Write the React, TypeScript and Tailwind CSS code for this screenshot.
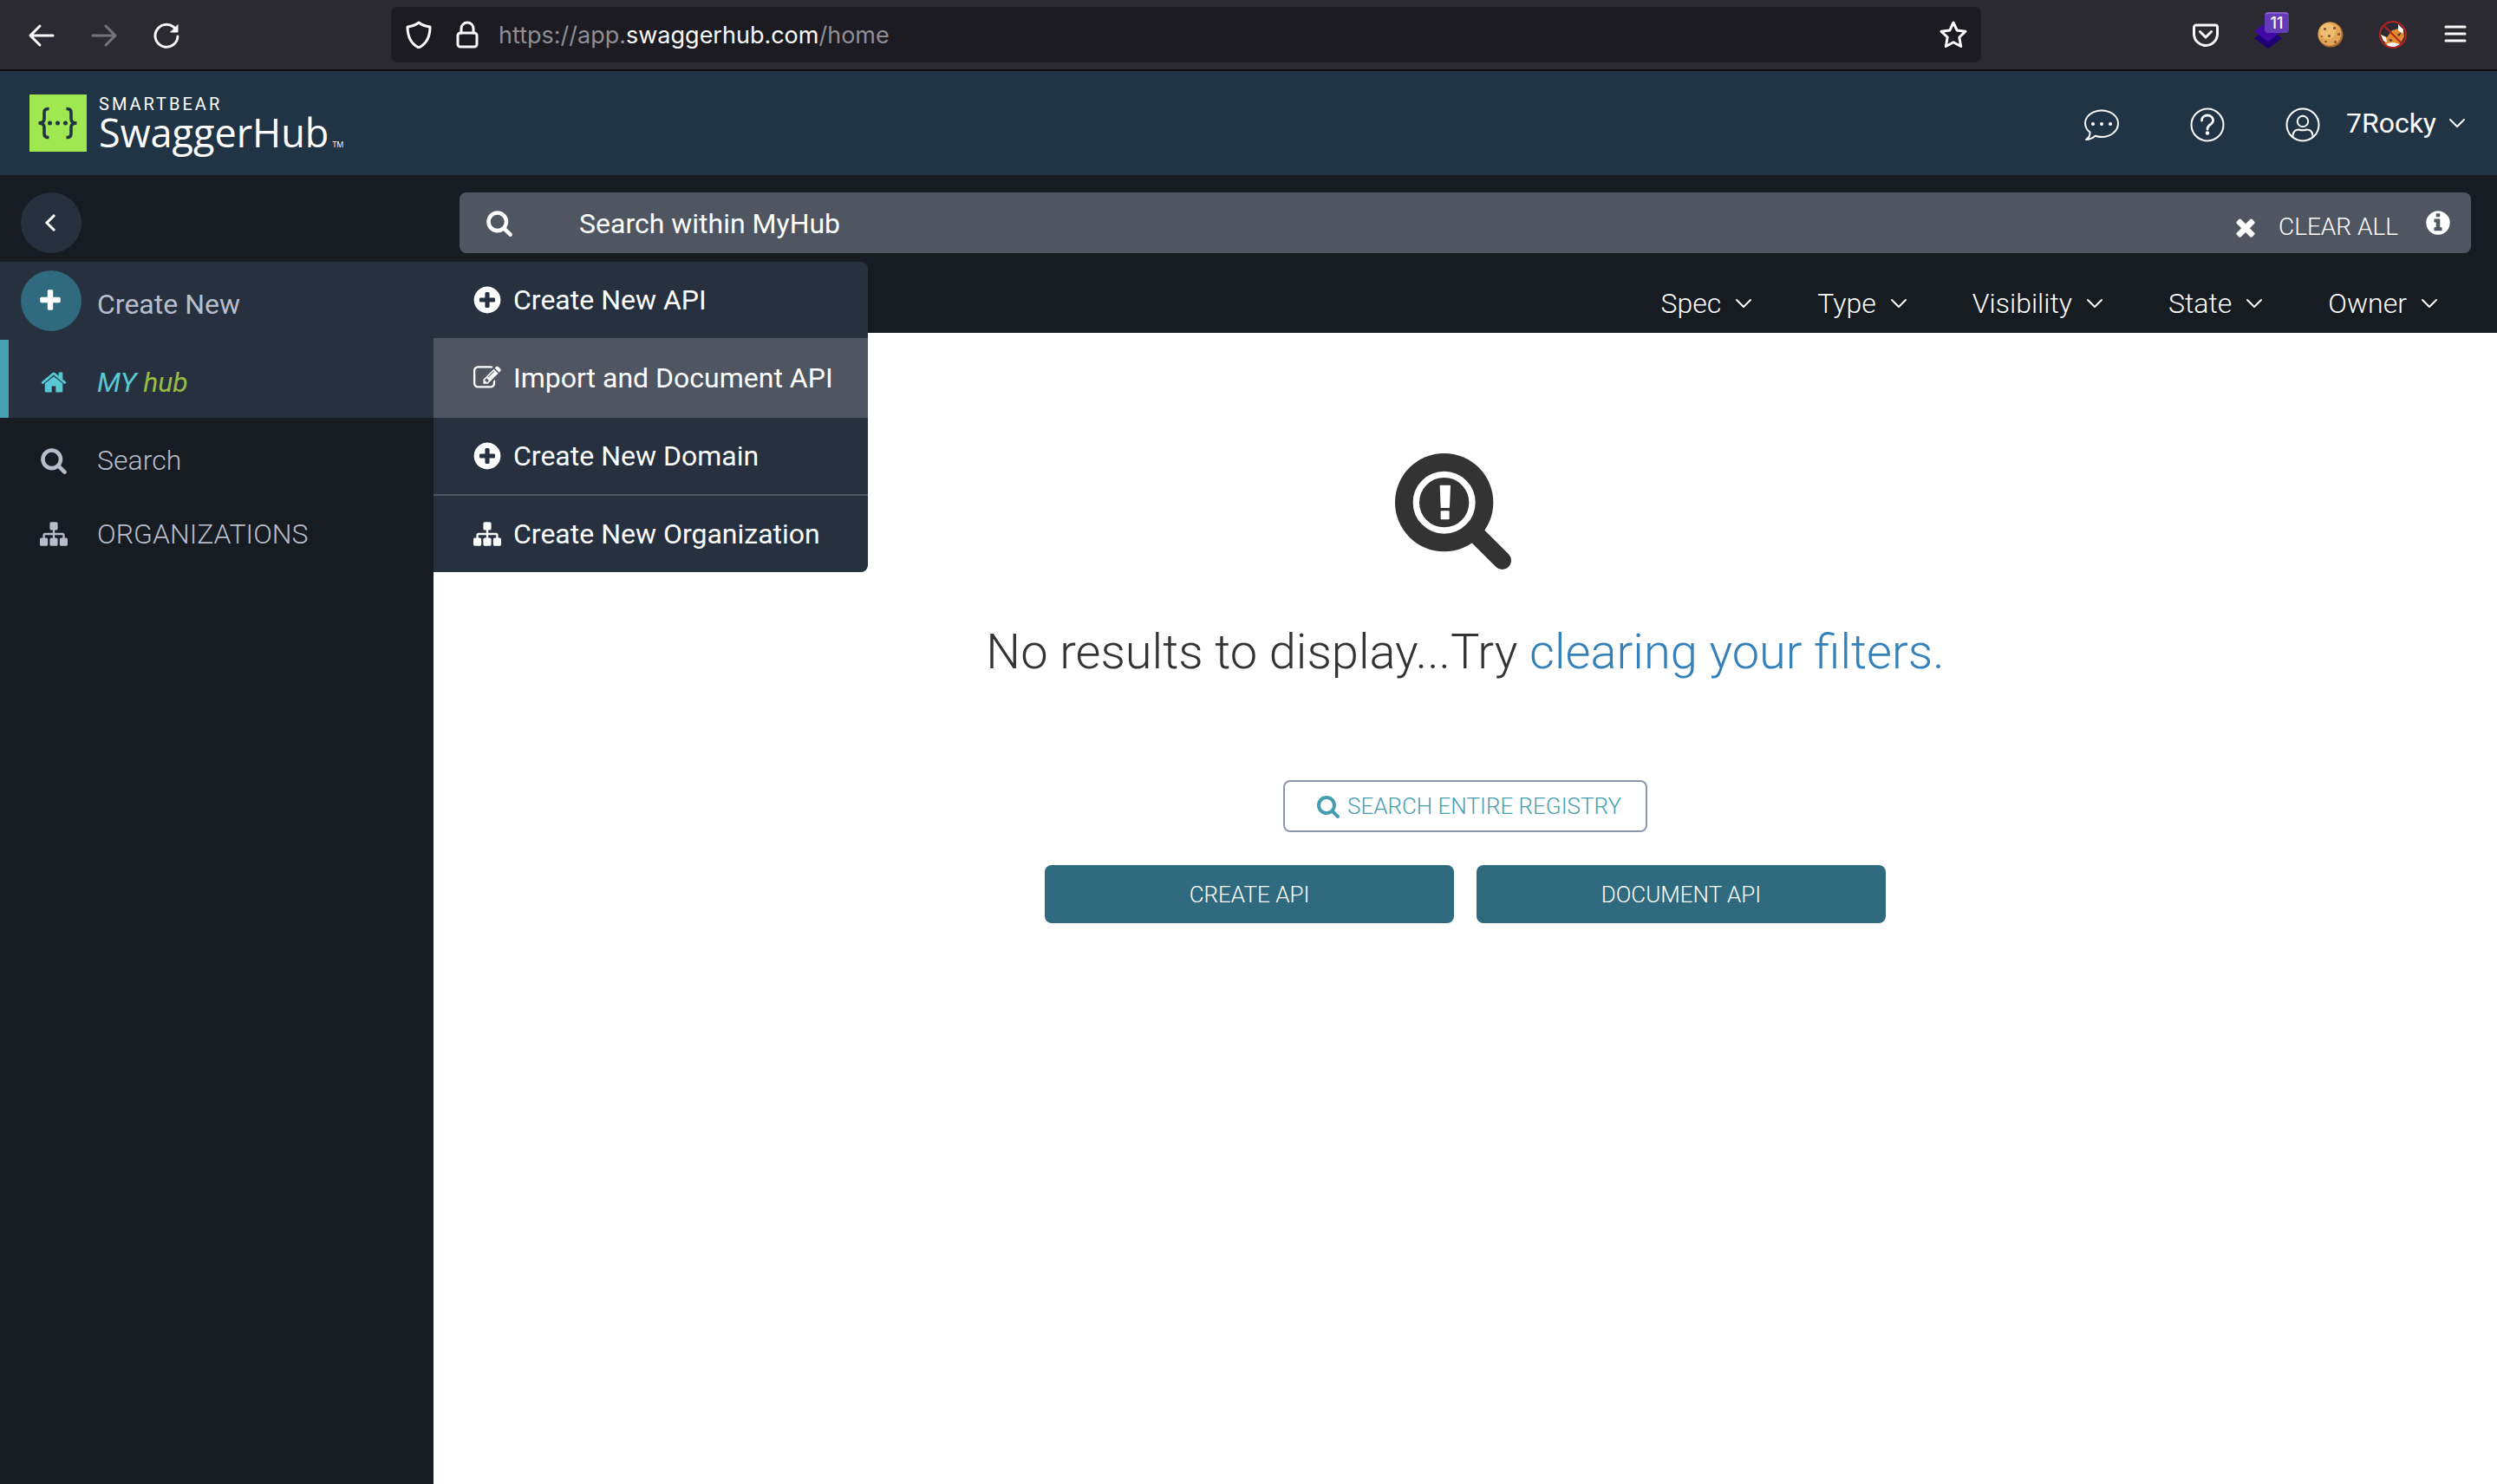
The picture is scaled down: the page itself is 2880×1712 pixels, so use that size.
import type { ReactNode } from "react";

const glyphs = {
  search:
    "M1216 832q0-185-131.5-316.5t-316.5-131.5-316.5 131.5-131.5 316.5 131.5 316.5 316.5 131.5 316.5-131.5 131.5-316.5zm512 832q0 52-38 90t-90 38q-54 0-90-38l-343-342q-179 124-399 124-143 0-273.5-55.5t-225-150-150-225-55.5-273.5 55.5-273.5 150-225 225-150 273.5-55.5 273.5 55.5 225 150 150 225 55.5 273.5q0 220-124 399l343 343q37 37 37 90z",
  plus: "M1600 736v192q0 40-28 68t-68 28h-416v416q0 40-28 68t-68 28h-192q-40 0-68-28t-28-68v-416h-416q-40 0-68-28t-28-68v-192q0-40 28-68t68-28h416v-416q0-40 28-68t68-28h192q40 0 68 28t28 68v416h416q40 0 68 28t28 68z",
  plusCircle:
    "M1344 960v-128q0-26-19-45t-45-19h-256v-256q0-26-19-45t-45-19h-128q-26 0-45 19t-19 45v256h-256q-26 0-45 19t-19 45v128q0 26 19 45t45 19h256v256q0 26 19 45t45 19h128q26 0 45-19t19-45v-256h256q26 0 45-19t19-45zm320-64q0 209-103 385.5t-279.5 279.5-385.5 103-385.5-103-279.5-279.5-103-385.5 103-385.5 279.5-279.5 385.5-103 385.5 103 279.5 279.5 103 385.5z",
  home: "M1472 992v480q0 26-19 45t-45 19h-384v-384h-256v384h-384q-26 0-45-19t-19-45v-480q0-1 .5-3t.5-3l575-474 575 474q1 2 1 6zm223-69l-62 74q-8 9-21 11h-3q-13 0-21-7l-692-577-692 577q-12 8-24 7-13-2-21-11l-62-74q-8-10-7-23.5t11-21.5l719-599q32-26 76-26t76 26l244 204v-195q0-14 9-23t23-9h192q14 0 23 9t9 23v408l219 182q10 8 11 21.5t-7 23.5z",
  sitemap:
    "M1792 1248v320q0 40-28 68t-68 28h-320q-40 0-68-28t-28-68v-320q0-40 28-68t68-28h96v-192h-512v192h96q40 0 68 28t28 68v320q0 40-28 68t-68 28h-320q-40 0-68-28t-28-68v-320q0-40 28-68t68-28h96v-192h-512v192h96q40 0 68 28t28 68v320q0 40-28 68t-68 28h-320q-40 0-68-28t-28-68v-320q0-40 28-68t68-28h96v-192q0-52 38-90t90-38h512v-192h-96q-40 0-68-28t-28-68v-320q0-40 28-68t68-28h320q40 0 68 28t28 68v320q0 40-28 68t-68 28h-96v192h512q52 0 90 38t38 90v192h96q40 0 68 28t28 68z",
  edit: "M888 1184l116-116-152-152-116 116v56h96v96h56zm440-720q-16-16-33 1l-350 350q-17 17-1 33t33-1l350-350q17-17 1-33zm80 594v190q0 119-84.5 203.5t-203.5 84.5h-832q-119 0-203.5-84.5t-84.5-203.5v-832q0-119 84.5-203.5t203.5-84.5h832q63 0 117 25 15 7 18 23 3 17-9 29l-49 49q-14 14-32 8-23-6-45-6h-832q-66 0-113 47t-47 113v832q0 66 47 113t113 47h832q66 0 113-47t47-113v-126q0-13 9-22l64-64q15-15 35-7t20 29zm-96-738l288 288-672 672h-288v-288zm444 132l-92 92-288-288 92-92q28-28 68-28t68 28l152 152q28 28 28 68t-28 68z",
  times:
    "M1490 1322q0 40-28 68l-136 136q-28 28-68 28t-68-28l-294-294-294 294q-28 28-68 28t-68-28l-136-136q-28-28-28-68t28-68l294-294-294-294q-28-28-28-68t28-68l136-136q28-28 68-28t68 28l294 294 294-294q28-28 68-28t68 28l136 136q28 28 28 68t-28 68l-294 294 294 294q28 28 28 68z",
  info: "M1152 1376v-160q0-14-9-23t-23-9h-96v-512q0-14-9-23t-23-9h-320q-14 0-23 9t-9 23v160q0 14 9 23t23 9h96v320h-96q-14 0-23 9t-9 23v160q0 14 9 23t23 9h448q14 0 23-9t9-23zm-128-896v-160q0-14-9-23t-23-9h-192q-14 0-23 9t-9 23v160q0 14 9 23t23 9h192q14 0 23-9t9-23zm640 416q0 209-103 385.5t-279.5 279.5-385.5 103-385.5-103-279.5-279.5-103-385.5 103-385.5 279.5-279.5 385.5-103 385.5 103 279.5 279.5 103 385.5z",
};

type GlyphName = keyof typeof glyphs;

function Glyph({ name, className = "size-8" }: { name: GlyphName; className?: string }) {
  return (
    <svg viewBox="0 0 1792 1792" fill="currentColor" aria-hidden="true" className={`shrink-0 ${className}`}>
      <path d={glyphs[name]} />
    </svg>
  );
}

function Line({ box = "0 0 32 32", className = "size-8", width = 2, children }: { box?: string; className?: string; width?: number; children: ReactNode }) {
  return (
    <svg viewBox={box} fill="none" stroke="currentColor" strokeWidth={width} strokeLinecap="round" strokeLinejoin="round" aria-hidden="true" className={`shrink-0 ${className}`}>
      {children}
    </svg>
  );
}

function Chevron() {
  return (
    <Line box="0 0 20 12" className="h-3 w-5">
      <path d="M2 2l8 8 8-8" />
    </Line>
  );
}

function BrowserBar() {
  return (
    <div className="flex h-[82px] items-center border-b-2 border-[#0c0c0d] bg-[#2b2a33] pr-8 pl-8 text-[#fbfbfe]">
      <div className="flex w-[419px] shrink-0 items-center gap-10 pt-0.5">
        <button type="button" aria-label="Back">
          <Line width={3}>
            <path d="M29 16H3M14 5L3 16l11 11" />
          </Line>
        </button>
        <button type="button" aria-label="Forward" className="text-[#74737a]">
          <Line width={3}>
            <path d="M3 16h26M18 5l11 11-11 11" />
          </Line>
        </button>
        <button type="button" aria-label="Reload">
          <Line width={3}>
            <path d="M29 17A13 13 0 1 1 24 6l2 2" />
            <path d="M29 4v8h-8z" fill="currentColor" strokeWidth={1} />
          </Line>
        </button>
      </div>
      <div className="flex h-16 w-[1834px] min-w-0 items-center rounded-lg bg-[#1c1b22] pr-4 pl-4">
        <Line width={3}>
          <path d="M16 2q5 4 13 5c0 11-3 19-13 24C6 26 3 18 3 7q8-1 13-5z" />
        </Line>
        <Line width={3} className="ml-6 size-8">
          <path d="M9 14V9a7 7 0 0 1 14 0v5" />
          <rect x="5" y="14" width="22" height="16" rx="3" />
        </Line>
        <div className="ml-5 min-w-0 flex-1 truncate pt-0.5 font-['Inter',sans-serif] text-[27px] leading-9 text-[#8f8e95]">
          https://app.<span className="text-[#fbfbfe]">swaggerhub.com</span>/home
        </div>
        <button type="button" aria-label="Bookmark this page">
          <Line width={3}>
            <path d="M16 2l4.200 9 9.800 1.200-7.200 6.800 1.900 10.500L16 24.700 7.300 29.500l1.900-10.500L2 12.200l9.800-1.200z" />
          </Line>
        </button>
      </div>
      <div className="ml-auto flex items-center gap-10">
        <button type="button" aria-label="Save to Pocket">
          <Line width={3}>
            <path d="M5 5h22a2.500 2.500 0 0 1 2.500 2.500V15a13.500 13.500 0 0 1-27 0V7.500A2.500 2.500 0 0 1 5 5z" />
            <path d="M9.500 12.500L16 19l6.500-6.500" />
          </Line>
        </button>
        <button type="button" aria-label="Extension, 11 items" className="relative">
          <svg viewBox="0 0 32 32" aria-hidden="true" className="size-8">
            <path d="M16 8l16 12-16 12L0 20z" fill="#1d0373" />
            <path d="M16 0l16 12-16 12L0 12z" fill="#410aa6" />
          </svg>
          <span className="absolute -top-2.5 left-3 flex h-6 w-7 items-center justify-center rounded border-t-2 border-[#8560cd] bg-[#643cb8] font-['Inter',sans-serif] text-[18px] leading-none font-medium text-white">
            11
          </span>
        </button>
        <button type="button" aria-label="Cookie editor">
          <svg viewBox="0 0 32 32" aria-hidden="true" className="size-8">
            <circle cx="16" cy="16" r="14.500" fill="#b06c2e" />
            <circle cx="15" cy="15" r="13.500" fill="#e2a656" />
            <circle cx="13" cy="12" r="9" fill="#edbd72" />
            <g fill="#8a5a30">
              <rect x="8" y="8" width="3" height="3" rx="1" />
              <rect x="19" y="7" width="3" height="3" rx="1" />
              <rect x="13" y="16" width="3" height="3" rx="1" />
              <rect x="5" y="17" width="2" height="2" rx="1" />
              <rect x="24" y="14" width="3" height="3" rx="1" />
              <rect x="20" y="23" width="3" height="3" rx="1" />
              <rect x="9" y="23" width="3" height="2" rx="1" />
            </g>
          </svg>
        </button>
        <button type="button" aria-label="Blocked fox extension">
          <svg viewBox="0 0 32 32" aria-hidden="true" className="size-8">
            <path d="M22 4l6 6 1 8-4 8-9 4-8-2-6-12 7 3 6-8 7-2z" fill="#e08a2c" />
            <path d="M22 4l6 6-1 5-5-4zM2 16l6 3 1 6-4-2zM9 26l8-1 7 2-7 4-7-2z" fill="#fff" />
            <path d="M11 21l5 1-3 2zM21 16l5-3-3 5z" fill="#3a3531" />
            <circle cx="16" cy="16" r="15" fill="none" stroke="#b5231c" strokeWidth="2" />
            <path d="M5.500 5.500l21 21" stroke="#b5231c" strokeWidth="2" />
          </svg>
        </button>
        <button type="button" aria-label="Open application menu">
          <Line width={3}>
            <path d="M5 7h22M5 15h22M5 23h22" />
          </Line>
        </button>
      </div>
    </div>
  );
}

function AppHeader() {
  return (
    <header className="flex h-[120px] items-center bg-[#203445] pr-9 pl-[34px] text-white">
      <a href="#home" aria-label="SmartBear SwaggerHub" className="flex items-center gap-3.5">
        <svg viewBox="0 0 66 66" aria-hidden="true" className="size-[66px]">
          <rect width="66" height="66" fill="#9fe851" />
          <g fill="none" stroke="#203445" strokeWidth="3.600">
            <path d="M22.500 16.500h-1q-4.500 0-4.500 4.500v7q0 5-6.500 5 6.500 0 6.500 5v7q0 4.500 4.500 4.500h1" />
            <path d="M42.500 16.500h1q4.500 0 4.500 4.500v7q0 5 6.500 5-6.500 0-6.500 5v7q0 4.500-4.500 4.500h-1" />
          </g>
          <g fill="#203445">
            <circle cx="23.500" cy="33" r="2.500" />
            <circle cx="32.500" cy="33" r="2.500" />
            <circle cx="41.500" cy="33" r="2.500" />
          </g>
        </svg>
        <span className="flex flex-col font-['Open_Sans',sans-serif]">
          <span className="font-[Roboto,sans-serif] text-xl leading-[22px] tracking-[3px]">SMARTBEAR</span>
          <span className="flex items-baseline gap-1 text-[45px] leading-11">
            SwaggerHub<span className="text-[9px] leading-3">TM</span>
          </span>
        </span>
      </a>
      <div className="ml-auto flex items-center">
        <button type="button" aria-label="Chat" className="pt-1">
          <Line box="0 0 40 40" className="size-10">
            <path d="M2 37q5-3 4.500-8.500A13.500 13.500 0 0 1 1 18.500C1 10 9.500 3.500 20 3.500S39 10 39 18.500 30.500 34 20 34q-4 0-7.500-1.200Q8 37 2 37z" />
            <g fill="currentColor" stroke="none">
              <circle cx="10" cy="19" r="2" />
              <circle cx="20" cy="19" r="2" />
              <circle cx="30" cy="19" r="2" />
            </g>
          </Line>
        </button>
        <button type="button" aria-label="Help" className="ml-[82px] pt-1">
          <Line box="0 0 40 40" className="size-10">
            <circle cx="20" cy="20" r="18.500" />
            <path d="M13.500 15c0-8 13-8 13 0 0 5-6.500 4.500-6.500 10" strokeWidth={2.8} />
            <circle cx="20" cy="29.500" r="2.200" fill="currentColor" stroke="none" />
          </Line>
        </button>
        <button type="button" className="ml-[70px] flex items-center text-[32px] leading-10">
          <span className="pt-1">
            <Line box="0 0 40 40" className="size-10">
              <circle cx="20" cy="20" r="18.500" />
              <circle cx="20" cy="16" r="6.200" />
              <path d="M8.500 34v-2q1-6.500 7-6.500 4.500 1.600 9 0 6 0 7 6.500v2" />
            </Line>
          </span>
          <span className="mr-3.5 ml-[30px]">7Rocky</span>
          <Chevron />
        </button>
      </div>
    </header>
  );
}

const createItems: { icon: GlyphName; label: string; box: string; row: string }[] = [
  { icon: "plusCircle", label: "Create New API", box: "size-9", row: "h-[88px]" },
  { icon: "edit", label: "Import and Document API", box: "size-8", row: "h-[92px] bg-[#4f5661]" },
  { icon: "plusCircle", label: "Create New Domain", box: "size-9", row: "h-[90px] border-b-2 border-[#4f5661]" },
  { icon: "sitemap", label: "Create New Organization", box: "size-8", row: "h-[88px]" },
];

function CreateMenu() {
  return (
    <ul className="absolute top-0 left-full z-10 w-[501px] overflow-hidden rounded-r-lg bg-[#27303f] text-white">
      {createItems.map((item) => (
        <li key={item.label}>
          <button type="button" className={`flex w-full items-center gap-3.5 pl-[46px] text-left ${item.row}`}>
            <span className="flex w-8 justify-center">
              <Glyph name={item.icon} className={item.box} />
            </span>
            <span className="whitespace-nowrap">{item.label}</span>
          </button>
        </li>
      ))}
    </ul>
  );
}

function Sidebar() {
  return (
    <nav aria-label="Main" className="w-[500px] shrink-0 bg-[#171b22] pt-5 text-[32px] leading-10 text-[#b9bdcb]">
      <button type="button" aria-label="Collapse sidebar" className="ml-6 flex size-[70px] items-center justify-center rounded-full bg-[#27303f] text-white">
        <Line box="0 0 24 24" className="size-6" width={3}>
          <path d="M16 3l-9 9 9 9" strokeLinecap="butt" strokeLinejoin="miter" />
        </Line>
      </button>
      <ul className="mt-2.5">
        <li className="relative bg-[#27303f]">
          <button type="button" className="flex h-[90px] w-full items-center pl-6">
            <span className="flex size-[70px] items-center justify-center rounded-full bg-[#2f6a7f] text-white">
              <Glyph name="plus" className="mr-0.5 size-[30px]" />
            </span>
            <span className="pt-2 pl-[18px]">Create New</span>
          </button>
          <CreateMenu />
        </li>
        <li>
          <a href="#myhub" className="flex h-[90px] items-center border-l-10 border-[#479fb2] bg-[#27303f] pt-2 pl-9">
            <Glyph name="home" className="size-8 text-[#58c9d4]" />
            <span className="pl-[34px] text-[#58c9d4] italic">
              MY <span className="text-[#98bd43]">hub</span>
            </span>
          </a>
        </li>
        <li>
          <a href="#search" className="flex h-[90px] items-center pt-2 pl-[46px] font-light">
            <Glyph name="search" />
            <span className="pl-[34px]">Search</span>
          </a>
        </li>
        <li>
          <a href="#organizations" className="flex h-[88px] items-center pl-[46px] font-light">
            <Glyph name="sitemap" />
            <span className="pl-[34px]">ORGANIZATIONS</span>
          </a>
        </li>
      </ul>
    </nav>
  );
}

function SearchPanel() {
  return (
    <div className="bg-[#171b22] text-white">
      <div className="px-[30px] pt-5">
        <form role="search" className="flex h-[70px] items-center rounded-lg bg-[#4f5661] pr-[22px] pl-[30px]">
          <Glyph name="search" />
          <input
            type="search"
            aria-label="Search within MyHub"
            placeholder="Search within MyHub"
            className="ml-[76px] min-w-0 flex-1 bg-transparent pt-0.5 text-[32px] leading-10 outline-none placeholder:text-white placeholder:opacity-100"
          />
          <button type="button" className="flex items-center gap-[22px] pt-2.5 text-[28px] leading-9 font-light">
            <Glyph name="times" />
            CLEAR ALL
          </button>
          <button type="button" aria-label="Search help" className="ml-[30px]">
            <Glyph name="info" />
          </button>
        </form>
      </div>
      <div className="flex h-[92px] items-center justify-end gap-[75px] pt-6 pr-[68px] text-[32px] leading-10 font-light">
        {["Spec", "Type", "Visibility", "State", "Owner"].map((name) => (
          <button key={name} type="button" className="flex items-center gap-4">
            {name}
            <Chevron />
          </button>
        ))}
      </div>
    </div>
  );
}

function EmptyState() {
  return (
    <section className="flex flex-col items-center pt-[139px] text-[#333]">
      <svg viewBox="0 0 402 402" aria-hidden="true" className="mr-7 size-[134px]">
        <circle cx="170" cy="170" r="170" fill="#333" />
        <path d="M250 250L371 371" stroke="#333" strokeWidth="62" strokeLinecap="round" />
        <circle cx="170" cy="170" r="97" fill="#333" stroke="#fff" strokeWidth="22" />
        <path d="M157 110h32q3 0 3 3l-3 73q0 3-3 3h-25q-3 0-3-3l-3-73q0-3 2-3z" fill="#fff" />
        <rect x="158" y="199" width="30" height="30" rx="3" fill="#fff" />
      </svg>
      <h1 className="mt-[55px] text-[56px] leading-20 font-light">
        No results to display...Try{" "}
        <a href="#clear" className="text-[#3480ba]">
          clearing your filters.
        </a>
      </h1>
      <button type="button" className="mt-[108px] flex h-[60px] items-center gap-2 rounded-lg border-2 border-[#8d97ab] pr-7 pl-9 text-[26px] leading-9 font-light text-[#449eb0]">
        <Glyph name="search" className="size-7" />
        SEARCH ENTIRE REGISTRY
      </button>
      <div className="mt-[38px] flex gap-[26px] text-[26px] leading-9 font-light text-white">
        <button type="button" className="h-[67px] w-[472px] rounded-lg bg-[#2f6a7f]">
          CREATE API
        </button>
        <button type="button" className="h-[67px] w-[472px] rounded-lg bg-[#2f6a7f]">
          DOCUMENT API
        </button>
      </div>
    </section>
  );
}

export default function App() {
  return (
    <div className="flex min-h-screen flex-col bg-white font-[Roboto,sans-serif]">
      <BrowserBar />
      <AppHeader />
      <div className="flex flex-1">
        <Sidebar />
        <main className="min-w-0 flex-1">
          <SearchPanel />
          <EmptyState />
        </main>
      </div>
    </div>
  );
}
